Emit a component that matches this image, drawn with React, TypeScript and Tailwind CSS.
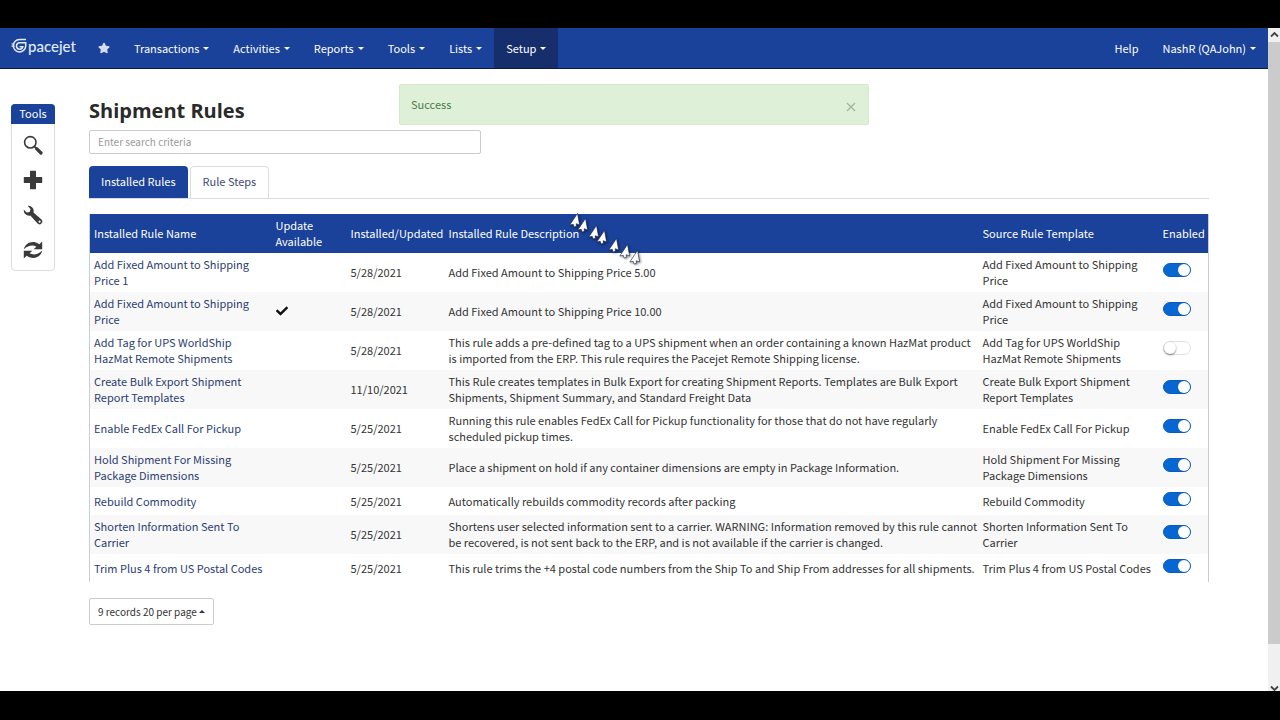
import { FaCheck, FaStar } from "react-icons/fa";

interface Rule {
  name: string;
  update?: boolean;
  date: string;
  description: string;
  template: string;
  enabled: boolean;
}

const rules: Rule[] = [
  {
    name: "Add Fixed Amount to Shipping Price 1",
    date: "5/28/2021",
    description: "Add Fixed Amount to Shipping Price 5.00",
    template: "Add Fixed Amount to Shipping Price",
    enabled: true,
  },
  {
    name: "Add Fixed Amount to Shipping Price",
    update: true,
    date: "5/28/2021",
    description: "Add Fixed Amount to Shipping Price 10.00",
    template: "Add Fixed Amount to Shipping Price",
    enabled: true,
  },
  {
    name: "Add Tag for UPS WorldShip HazMat Remote Shipments",
    date: "5/28/2021",
    description:
      "This rule adds a pre-defined tag to a UPS shipment when an order containing a known HazMat product is imported from the ERP. This rule requires the Pacejet Remote Shipping license.",
    template: "Add Tag for UPS WorldShip HazMat Remote Shipments",
    enabled: false,
  },
  {
    name: "Create Bulk Export Shipment Report Templates",
    date: "11/10/2021",
    description:
      "This Rule creates templates in Bulk Export for creating Shipment Reports. Templates are Bulk Export Shipments, Shipment Summary, and Standard Freight Data",
    template: "Create Bulk Export Shipment Report Templates",
    enabled: true,
  },
  {
    name: "Enable FedEx Call For Pickup",
    date: "5/25/2021",
    description:
      "Running this rule enables FedEx Call for Pickup functionality for those that do not have regularly scheduled pickup times.",
    template: "Enable FedEx Call For Pickup",
    enabled: true,
  },
  {
    name: "Hold Shipment For Missing Package Dimensions",
    date: "5/25/2021",
    description: "Place a shipment on hold if any container dimensions are empty in Package Information.",
    template: "Hold Shipment For Missing Package Dimensions",
    enabled: true,
  },
  {
    name: "Rebuild Commodity",
    date: "5/25/2021",
    description: "Automatically rebuilds commodity records after packing",
    template: "Rebuild Commodity",
    enabled: true,
  },
  {
    name: "Shorten Information Sent To Carrier",
    date: "5/25/2021",
    description:
      "Shortens user selected information sent to a carrier. WARNING: Information removed by this rule cannot be recovered, is not sent back to the ERP, and is not available if the carrier is changed.",
    template: "Shorten Information Sent To Carrier",
    enabled: true,
  },
  {
    name: "Trim Plus 4 from US Postal Codes",
    date: "5/25/2021",
    description:
      "This rule trims the +4 postal code numbers from the Ship To and Ship From addresses for all shipments.",
    template: "Trim Plus 4 from US Postal Codes",
    enabled: true,
  },
];

const menus = ["Transactions", "Activities", "Reports", "Tools", "Lists", "Setup"];

// tip of each arrow in the pointer trail
const trail = [
  { x: 577, y: 213 },
  { x: 585, y: 218 },
  { x: 596, y: 225 },
  { x: 604, y: 230 },
  { x: 616, y: 238 },
  { x: 627, y: 244 },
  { x: 637, y: 250 },
];

function Caret({ up = false }: { up?: boolean }) {
  return (
    <svg viewBox="0 0 6 3" className="w-1.5 h-[3px] shrink-0" fill="currentColor" aria-hidden="true">
      <path d={up ? "M0 3 3 0l3 3z" : "M0 0h6L3 3z"} />
    </svg>
  );
}

function Logo() {
  return (
    <a href="#" className="flex items-center gap-px pb-1 text-[#e3ecfa]">
      <svg viewBox="0 0 16 16" className="size-4" fill="none" stroke="currentColor" aria-hidden="true">
        <path d="M15 1.500H8.400a6.200 6.200 0 1 0 6.300 6.700V4.800H8.700a3.200 3.200 0 1 0 3.100 4H8.600" strokeWidth="1.5" />
        <path d="M.5 8.200h3M.5 6h3" strokeWidth="1.2" />
      </svg>
      <span className="font-['Lato',sans-serif] text-[15px] font-medium leading-4">pacejet</span>
    </a>
  );
}

function SearchIcon() {
  return (
    <svg viewBox="0 0 20 20" className="size-5" fill="none" stroke="#3a3a3a" aria-hidden="true">
      <circle cx="7.3" cy="7.3" r="5.7" strokeWidth="1.6" />
      <path d="m11.6 11.6 2 2" strokeWidth="1.8" />
      <path d="m13.6 13.6 4.4 4.4" strokeWidth="3.2" strokeLinecap="round" />
    </svg>
  );
}

function PlusIcon() {
  return (
    <svg viewBox="0 0 20 20" className="size-5" fill="#3a3a3a" aria-hidden="true">
      <path d="M7.6.8h4.8a.6.6 0 0 1 .6.6V7h5.6a.6.6 0 0 1 .6.6v4.8a.6.6 0 0 1-.6.6H13v5.6a.6.6 0 0 1-.6.6H7.6a.6.6 0 0 1-.6-.6V13H1.4a.6.6 0 0 1-.6-.6V7.6a.6.6 0 0 1 .6-.6H7V1.4a.6.6 0 0 1 .6-.6z" />
    </svg>
  );
}

function WrenchIcon() {
  return (
    <svg viewBox="0 0 20 20" className="size-5" aria-hidden="true">
      <path
        fill="#3a3a3a"
        fillRule="evenodd"
        d="M4.6.8a5.3 5.3 0 0 1 5.9 6.6l8 7.2a2.8 2.8 0 0 1-3.9 4l-7.3-8.1A5.3 5.3 0 0 1 .8 4.7l3 2.9 2.9-.7.8-2.9zM16.6 15.6a1.1 1.1 0 1 0 .01 2.2 1.1 1.1 0 0 0 0-2.2z"
      />
    </svg>
  );
}

function RefreshIcon() {
  return (
    <svg viewBox="0 0 20 20" className="size-5" fill="#3a3a3a" aria-hidden="true">
      <path d="M.8 9.3C2 3.8 7.500 1 12.800 2.400c1.300.4 2.500 1 3.500 1.800L19.200 1.500v7.800h-8.600l2.800-2.600C9.500 4.600 5 5.600.8 9.300z" />
      <path d="M19.200 10.700c-1.200 5.500-6.700 8.300-12 6.900-1.300-.4-2.500-1-3.500-1.800L.8 18.500v-7.800h8.600l-2.800 2.600c3.900 2.100 8.400 1.100 12.600-2.600z" />
    </svg>
  );
}

const tools = [
  { label: "Search", Icon: SearchIcon },
  { label: "Add", Icon: PlusIcon },
  { label: "Configure", Icon: WrenchIcon },
  { label: "Refresh", Icon: RefreshIcon },
];

function Navbar() {
  return (
    <nav className="flex h-[41px] items-stretch border-b border-[#0c1c40] bg-[#1a429a] pl-[11px] text-white">
      <Logo />
      <a href="#" aria-label="Favorites" className="flex items-center pl-[22px] pr-3">
        <FaStar size={12} className="text-[#d5dcf0]" />
      </a>
      {menus.map((menu) => (
        <button
          key={menu}
          className={`flex items-center gap-1 px-3 ${menu === "Setup" ? "bg-[#162f6c]" : ""}`}
        >
          {menu}
          <Caret />
        </button>
      ))}
      <div className="ml-auto flex">
        <a href="#" className="flex items-center px-3">
          Help
        </a>
        <button className="flex items-center gap-1 px-3">
          NashR (QAJohn)
          <Caret />
        </button>
      </div>
    </nav>
  );
}

function RuleTable() {
  return (
    <table className="w-full table-fixed border-x border-[#c9ccd2] text-left leading-4 text-[#333]">
      <colgroup>
        <col className="w-[182px]" />
        <col className="w-[75px]" />
        <col className="w-[98px]" />
        <col />
        <col className="w-[180px]" />
        <col className="w-[50px]" />
      </colgroup>
      <thead className="bg-[#1a429a] text-white">
        <tr className="h-[39px] [&>th]:pl-1 [&>th]:pb-0.5 [&>th]:font-normal">
          <th>Installed Rule Name</th>
          <th>Update Available</th>
          <th>Installed/Updated</th>
          <th>Installed Rule Description</th>
          <th>Source Rule Template</th>
          <th>Enabled</th>
        </tr>
      </thead>
      <tbody>
        {rules.map((rule) => (
          <tr key={rule.name} className="h-7 even:bg-[#f8f8f9] [&>td]:pl-1 [&>td]:pt-[3px] [&>td]:pb-1">
            <td>
              <a href="#" className="text-[#2b3d70]">
                {rule.name}
              </a>
            </td>
            <td>{rule.update && <FaCheck size={12} className="text-[#111]" />}</td>
            <td>{rule.date}</td>
            <td>{rule.description}</td>
            <td>{rule.template}</td>
            <td>
              <input
                type="checkbox"
                role="switch"
                aria-label={`Enable ${rule.name}`}
                defaultChecked={rule.enabled}
                className="mb-1 block h-3.5 w-7 appearance-none rounded-full border border-[#dfdfdf] bg-white before:block before:size-3 before:rounded-full before:bg-white before:shadow-[0_1px_2px_rgba(0,0,0,0.5)] checked:border-[#0b5cb8] checked:bg-[#0767d2] checked:before:ml-3.5 checked:before:shadow-none"
              />
            </td>
          </tr>
        ))}
      </tbody>
    </table>
  );
}

export default function App() {
  return (
    <div className="flex min-h-screen flex-col bg-black font-['Noto_Sans_CJK_SC','Open_Sans',sans-serif] text-[11px]">
      <div className="h-7" />
      <div className="relative flex flex-1 bg-white">
        <div className="flex-1">
          <Navbar />
          <div className="flex items-start gap-[34px] pl-[11px] pr-[59px] pt-[30px]">
            <aside className="mt-[5px] w-11 shrink-0 rounded-sm border border-[#dcdcdc]">
              <h2 className="-mx-px -mt-px rounded-t-sm bg-[#1a429a] pt-px pb-[3px] text-center leading-4 text-white">
                Tools
              </h2>
              <div className="flex flex-col items-center gap-[15px] pt-[11px] pb-2.5">
                {tools.map(({ label, Icon }) => (
                  <button key={label} aria-label={label}>
                    <Icon />
                  </button>
                ))}
              </div>
            </aside>

            <main className="min-w-0 flex-1">
              <h1 className="font-['Open_Sans',sans-serif] text-xl font-bold leading-6 text-[#2a2a2a]">
                Shipment Rules
              </h1>
              <input
                type="text"
                aria-label="Search rules"
                placeholder="Enter search criteria"
                className="mt-[7px] block h-6 w-[392px] rounded-xs border border-[#ccc] px-2 pb-0.5 text-[10px] placeholder:text-[#999]"
              />
              <div className="mt-3 flex gap-0.5 border-b border-[#ddd]">
                <button className="h-8 rounded-t-sm bg-[#1a429a] px-3 pb-0.5 text-white">Installed Rules</button>
                <button className="h-8 rounded-t-sm border border-b-0 border-[#ddd] px-3 pb-0.5 text-[#3c4a75]">
                  Rule Steps
                </button>
              </div>
              <div className="mt-[15px]">
                <RuleTable />
              </div>
              <button className="mt-4 flex h-[27px] items-center gap-0.5 rounded-xs border border-[#ccc] px-2 text-[10px] text-[#333]">
                9 records 20 per page
                <Caret up />
              </button>
            </main>
          </div>
        </div>

        {/* Scrollbar */}
        <div className="flex w-3 flex-col items-center justify-between bg-[#f0f0f0] text-[#444]">
          <svg viewBox="0 0 12 14" className="h-3.5 w-3" fill="none" stroke="currentColor" strokeWidth="1.8">
            <path d="M3 8.5 6.5 5 10 8.5" />
          </svg>
          <div className="h-[602px] w-full bg-[#cbcbcb]" />
          <div className="flex-1" />
          <svg viewBox="0 0 12 6" className="h-1.5 w-3" fill="none" stroke="currentColor" strokeWidth="1.8">
            <path d="M3 1.5 6.5 5 10 1.5" />
          </svg>
        </div>

        <div
          role="alert"
          className="absolute left-[calc(50%-6px)] top-14 flex h-[41px] w-[470px] -translate-x-1/2 items-center justify-between rounded-xs border border-[#d6e9c6] bg-[#dff0d8] pl-[11px] pr-3 text-[#4c7a4d]"
        >
          Success
          <button aria-label="Close" className="pt-1 text-[#9fb39a]">
            <svg viewBox="0 0 10 10" className="size-2.5" fill="none" stroke="currentColor" strokeWidth="1.2">
              <path d="m1 1 8 8M9 1 1 9" />
            </svg>
          </button>
        </div>
      </div>
      <div className="h-[29px]" />

      {/* Pointer trail */}
      {trail.map(({ x, y }) => (
        <svg
          key={x}
          viewBox="0 0 12 16"
          className="pointer-events-none absolute h-4 w-3 drop-shadow-[1px_1px_1px_rgba(0,0,0,0.5)]"
          style={{ left: x - 8, top: y }}
          fill="#fff"
          stroke="#1b2440"
          strokeWidth="0.6"
        >
          <path d="M8.5.4.8 12l3.400-.7 1 2.700 2.200-.7-.2-2.600 3.400 1.200z" />
        </svg>
      ))}
    </div>
  );
}
